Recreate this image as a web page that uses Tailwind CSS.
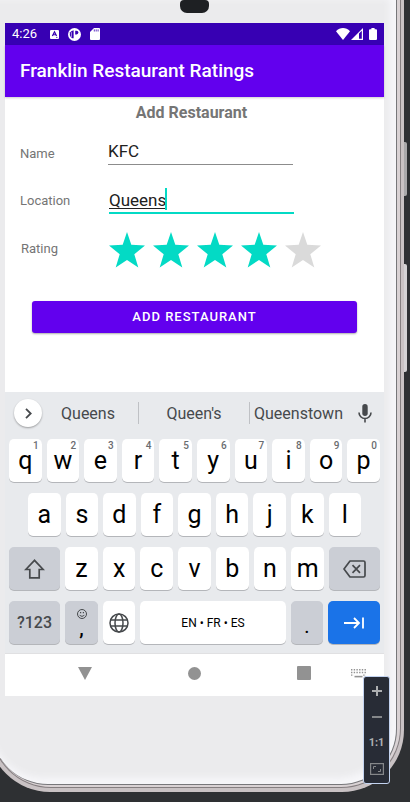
<!DOCTYPE html>
<html lang="en">
<head>
<meta charset="utf-8">
<meta name="viewport" content="width=device-width, initial-scale=1">
<title>Franklin Restaurant Ratings</title>
<script src="https://cdn.jsdelivr.net/npm/@tailwindcss/browser@4"></script>
</head>
<body class="bg-[#2e3033] font-['Roboto',sans-serif]">
<div class="relative flex min-h-screen overflow-hidden pr-[6px] pb-[10px]">
  <!-- side buttons of the handset -->
  <span class="absolute top-[142px] right-[3px] h-[54px] w-2 rounded-r-xs bg-[#aaa9ab]"></span>
  <span class="absolute top-[264px] right-[3px] h-[108px] w-2 rounded-r-xs bg-[#d4d2d4]"></span>

  <!-- metal rim -->
  <div class="relative -ml-3 flex flex-1 rounded-b-[62px] bg-[#c9c2c4] pr-[3px] pb-[4px] pl-[3px]">
   <div class="flex flex-1 rounded-b-[60px] border-x border-b border-[#857e80] bg-[#d9d2d4] pr-[3px] pb-[2px]">
    <!-- glass -->
    <div class="flex flex-1 rounded-b-[56px] border-r border-b border-[#77777a] bg-[#ebebed] pr-[12px] pl-[13px] shadow-[inset_-4px_-4px_7px_2px_#f7f7fa]">
     <div class="flex flex-1 flex-col">
      <div class="flex h-[23px] justify-center"><span class="h-[13px] w-[29px] rounded-b-[7px] rounded-t-sm bg-[#1e2023]"></span></div>

      <div class="flex flex-col bg-white">
        <!-- status bar -->
        <div class="flex h-[22px] items-center bg-[#3700b3] pr-[7px] pl-[7px] text-white">
          <span class="w-[38px] text-[13px]">4:26</span>
          <svg class="mr-[9px] size-[9px]" viewBox="0 0 9 10" preserveAspectRatio="none"><rect width="9" height="10" rx="1" fill="#fff"/><path d="M2.4 6.7 4.5 2l2.1 4.7M3.2 5.2h2.6" fill="none" stroke="#3700b3" stroke-width="1.2"/><path d="M6 8.3h1.5" stroke="#3700b3" stroke-width=".7"/></svg>
          <svg class="mr-[9px] size-[13px]" viewBox="0 0 13 13"><circle cx="6.5" cy="6.5" r="6.5" fill="#fff"/><path d="M5.600 2.200V10.200H4.200A4.900 4.900 0 0 1 2.200 4.200Q3.500 2.500 5.600 2.200z" fill="#3700b3"/><path d="M3.400 4.200V9.200" stroke="#fff" stroke-width=".6"/><path d="M7.200 2.800h1.400a1.700 1.700 0 0 1 0 3.6H7.2z" fill="#3700b3"/></svg>
          <svg class="h-[12px] w-[10px]" viewBox="0 0 10 12"><path d="M4 0h5a1 1 0 0 1 1 1v10a1 1 0 0 1-1 1H1a1 1 0 0 1-1-1V4z" fill="#fff"/><path d="M4.300 1.400v2.100M6.200 1.400v2.100M8.100 1.400v2.100" stroke="#3700b3" stroke-width=".8"/></svg>
          <svg class="ml-auto h-[12px] w-[14px]" viewBox="0 0 14 12"><path d="M7 12 0 3.200C4-1 10-1 14 3.200z" fill="#fff"/></svg>
          <svg class="ml-px h-[12px] w-[12px]" viewBox="0 0 12 12"><path d="M0 12 12 0v12z" fill="#fff"/><path d="M8 5.600 10.800 2.800v8H8z" fill="#3700b3"/></svg>
          <svg class="ml-[6px] h-[12px] w-[8px]" viewBox="0 0 8 12"><path d="M2.400 0h3.200v1.200H7a1 1 0 0 1 1 1V11a1 1 0 0 1-1 1H1a1 1 0 0 1-1-1V2.200a1 1 0 0 1 1-1h1.400z" fill="#fff"/></svg>
        </div>

        <header class="flex h-[52px] items-center bg-[#6200ee] px-[15px] shadow-[0_1px_2px_#0003]">
          <h1 class="text-[19px] font-medium text-white">Franklin Restaurant Ratings</h1>
        </header>

        <form class="flex flex-col pb-[59px]">
          <h2 class="pr-1.5 text-center text-[16px] leading-[31px] font-bold text-[#757575]">Add Restaurant</h2>
          <div class="flex h-[52px] items-center pl-[15px]">
            <label for="name" class="w-[88px] text-[13px] text-[#757575]">Name</label>
            <input id="name" value="KFC" class="mb-[6px] h-[28px] w-[185px] border-b border-[#8c8c8c] pt-px text-[17px] text-[#212121] outline-none">
          </div>
          <div class="flex h-[42px] items-center pl-[15px]">
            <label for="location" class="w-[89px] text-[13px] text-[#757575]">Location</label>
            <div class="relative mb-[2px]">
              <input id="location" value="Queens" class="h-[28px] w-[185px] border-b-2 border-[#03dac5] pt-[2px] text-[17px] text-[#212121] underline underline-offset-2 outline-none">
              <span class="absolute top-[2px] left-[56px] h-[22px] w-[2px] bg-[#03dac5]"></span>
            </div>
          </div>
          <div role="radiogroup" aria-labelledby="rating-label" class="flex h-[54px] items-center pl-[16px]">
            <span id="rating-label" class="w-[88px] text-[13px] text-[#757575]">Rating</span>
            <div class="flex gap-2 pt-[2px]">
              <label class="relative text-[#03dac5]"><input type="radio" name="rating" class="absolute size-full appearance-none" aria-label="1 star"><svg class="size-[36px]" viewBox="0 0 36 36" fill="currentColor"><path d="M18 0l4.300 12.700L36 13.500 25.300 22.200 29.300 35.500 18 28 6.700 35.500l4-13.300L0 13.500l13.700-.8z"/></svg></label>
              <label class="relative text-[#03dac5]"><input type="radio" name="rating" class="absolute size-full appearance-none" aria-label="2 stars"><svg class="size-[36px]" viewBox="0 0 36 36" fill="currentColor"><path d="M18 0l4.300 12.700L36 13.500 25.300 22.200 29.300 35.500 18 28 6.700 35.500l4-13.300L0 13.500l13.700-.8z"/></svg></label>
              <label class="relative text-[#03dac5]"><input type="radio" name="rating" class="absolute size-full appearance-none" aria-label="3 stars"><svg class="size-[36px]" viewBox="0 0 36 36" fill="currentColor"><path d="M18 0l4.300 12.700L36 13.500 25.300 22.200 29.300 35.500 18 28 6.700 35.500l4-13.300L0 13.500l13.700-.8z"/></svg></label>
              <label class="relative text-[#03dac5]"><input type="radio" name="rating" class="absolute size-full appearance-none" aria-label="4 stars" checked><svg class="size-[36px]" viewBox="0 0 36 36" fill="currentColor"><path d="M18 0l4.300 12.700L36 13.500 25.300 22.200 29.300 35.500 18 28 6.700 35.500l4-13.300L0 13.500l13.700-.8z"/></svg></label>
              <label class="relative text-[#dadada]"><input type="radio" name="rating" class="absolute size-full appearance-none" aria-label="5 stars"><svg class="size-[36px]" viewBox="0 0 36 36" fill="currentColor"><path d="M18 0l4.300 12.700L36 13.500 25.300 22.200 29.300 35.500 18 28 6.700 35.500l4-13.300L0 13.500l13.700-.8z"/></svg></label>
            </div>
          </div>
          <button type="button" class="mx-[27px] mt-[25px] h-[32px] rounded-[3px] bg-[#6200ee] text-[13px] font-medium tracking-[1px] text-white shadow-[0_1px_2px_#0005]">ADD RESTAURANT</button>
        </form>

        <!-- on-screen keyboard -->
        <section aria-label="Keyboard" class="bg-[#e8eaed] pb-[9px]">
          <div class="flex h-[42px] items-center pr-[12px] pl-[9px] text-[16px] text-[#46494c]">
            <button aria-label="More" class="flex size-[28px] items-center justify-center rounded-full bg-white shadow-[0_1px_2px_#0005]"><svg class="h-[11px] w-[7px]" viewBox="0 0 7 11" fill="none" stroke="#46494c" stroke-width="1.800"><path d="M1 .8 5.700 5.500 1 10.200"/></svg></button>
            <button class="w-[92px] pt-px text-center">Queens</button>
            <span class="ml-[4px] h-[22px] w-px bg-[#bfc1c5]"></span>
            <button class="flex-1 pt-px text-center">Queen's</button>
            <span class="h-[22px] w-px bg-[#bfc1c5]"></span>
            <button class="w-[97px] pt-px text-center">Queenstown</button>
            <button aria-label="Voice input" class="ml-[11px]"><svg class="h-[19px] w-[14px]" viewBox="0 0 14 19"><rect x="4.300" y="0" width="5.400" height="12" rx="2.700" fill="#46494c"/><path d="M1 8.500a6 6 0 0 0 12 0M7 14.500V18.500" fill="none" stroke="#46494c" stroke-width="1.600"/></svg></button>
          </div>

          <div class="flex flex-col gap-[11px] px-[4px] pt-[5px] text-[25px] text-black">
            <div class="flex gap-[5px]">
              <button class="relative h-[43px] flex-1 rounded-[5px] bg-white shadow-[0_1px_0_#b4b6ba]">q<span class="absolute top-[2px] right-[3px] text-[10px] leading-[10px] font-medium text-[#6a6c70]">1</span></button>
              <button class="relative h-[43px] flex-1 rounded-[5px] bg-white shadow-[0_1px_0_#b4b6ba]">w<span class="absolute top-[2px] right-[3px] text-[10px] leading-[10px] font-medium text-[#6a6c70]">2</span></button>
              <button class="relative h-[43px] flex-1 rounded-[5px] bg-white shadow-[0_1px_0_#b4b6ba]">e<span class="absolute top-[2px] right-[3px] text-[10px] leading-[10px] font-medium text-[#6a6c70]">3</span></button>
              <button class="relative h-[43px] flex-1 rounded-[5px] bg-white shadow-[0_1px_0_#b4b6ba]">r<span class="absolute top-[2px] right-[3px] text-[10px] leading-[10px] font-medium text-[#6a6c70]">4</span></button>
              <button class="relative h-[43px] flex-1 rounded-[5px] bg-white shadow-[0_1px_0_#b4b6ba]">t<span class="absolute top-[2px] right-[3px] text-[10px] leading-[10px] font-medium text-[#6a6c70]">5</span></button>
              <button class="relative h-[43px] flex-1 rounded-[5px] bg-white shadow-[0_1px_0_#b4b6ba]">y<span class="absolute top-[2px] right-[3px] text-[10px] leading-[10px] font-medium text-[#6a6c70]">6</span></button>
              <button class="relative h-[43px] flex-1 rounded-[5px] bg-white shadow-[0_1px_0_#b4b6ba]">u<span class="absolute top-[2px] right-[3px] text-[10px] leading-[10px] font-medium text-[#6a6c70]">7</span></button>
              <button class="relative h-[43px] flex-1 rounded-[5px] bg-white shadow-[0_1px_0_#b4b6ba]">i<span class="absolute top-[2px] right-[3px] text-[10px] leading-[10px] font-medium text-[#6a6c70]">8</span></button>
              <button class="relative h-[43px] flex-1 rounded-[5px] bg-white shadow-[0_1px_0_#b4b6ba]">o<span class="absolute top-[2px] right-[3px] text-[10px] leading-[10px] font-medium text-[#6a6c70]">9</span></button>
              <button class="relative h-[43px] flex-1 rounded-[5px] bg-white shadow-[0_1px_0_#b4b6ba]">p<span class="absolute top-[2px] right-[3px] text-[10px] leading-[10px] font-medium text-[#6a6c70]">0</span></button>
            </div>
            <div class="flex gap-[5px] px-[19px]">
              <button class="h-[43px] flex-1 rounded-[5px] bg-white shadow-[0_1px_0_#b4b6ba]">a</button>
              <button class="h-[43px] flex-1 rounded-[5px] bg-white shadow-[0_1px_0_#b4b6ba]">s</button>
              <button class="h-[43px] flex-1 rounded-[5px] bg-white shadow-[0_1px_0_#b4b6ba]">d</button>
              <button class="h-[43px] flex-1 rounded-[5px] bg-white shadow-[0_1px_0_#b4b6ba]">f</button>
              <button class="h-[43px] flex-1 rounded-[5px] bg-white shadow-[0_1px_0_#b4b6ba]">g</button>
              <button class="h-[43px] flex-1 rounded-[5px] bg-white shadow-[0_1px_0_#b4b6ba]">h</button>
              <button class="h-[43px] flex-1 rounded-[5px] bg-white shadow-[0_1px_0_#b4b6ba]">j</button>
              <button class="h-[43px] flex-1 rounded-[5px] bg-white shadow-[0_1px_0_#b4b6ba]">k</button>
              <button class="h-[43px] flex-1 rounded-[5px] bg-white shadow-[0_1px_0_#b4b6ba]">l</button>
            </div>
            <div class="flex gap-[5px]">
              <button aria-label="Shift" class="flex h-[43px] w-[51px] items-center justify-center rounded-[5px] bg-[#cbced5] shadow-[0_1px_0_#b4b6ba]"><svg class="h-[20px] w-[21px]" viewBox="0 0 21 20" fill="none" stroke="#46494c" stroke-width="1.700"><path d="M10.500 1.300 1.800 10.500H5.800V18.800H15.200V10.500H19.200z"/></svg></button>
              <button class="h-[43px] flex-1 rounded-[5px] bg-white shadow-[0_1px_0_#b4b6ba]">z</button>
              <button class="h-[43px] flex-1 rounded-[5px] bg-white shadow-[0_1px_0_#b4b6ba]">x</button>
              <button class="h-[43px] flex-1 rounded-[5px] bg-white shadow-[0_1px_0_#b4b6ba]">c</button>
              <button class="h-[43px] flex-1 rounded-[5px] bg-white shadow-[0_1px_0_#b4b6ba]">v</button>
              <button class="h-[43px] flex-1 rounded-[5px] bg-white shadow-[0_1px_0_#b4b6ba]">b</button>
              <button class="h-[43px] flex-1 rounded-[5px] bg-white shadow-[0_1px_0_#b4b6ba]">n</button>
              <button class="h-[43px] flex-1 rounded-[5px] bg-white shadow-[0_1px_0_#b4b6ba]">m</button>
              <button aria-label="Backspace" class="flex h-[43px] w-[51px] items-center justify-center rounded-[5px] bg-[#cbced5] shadow-[0_1px_0_#b4b6ba]"><svg class="h-[18px] w-[23px]" viewBox="0 0 23 18" fill="none" stroke="#46494c" stroke-width="1.700"><path d="M7 1H20.500A1.500 1.500 0 0 1 22 2.500V15.500A1.500 1.500 0 0 1 20.500 17H7L1 9z" stroke-linejoin="round"/><path d="M9.500 5.200 17 12.800M17 5.200 9.500 12.800"/></svg></button>
            </div>
            <div class="flex gap-[5px]">
              <button class="h-[43px] w-[51px] rounded-[5px] bg-[#cbced5] text-[16px] font-medium text-[#46494c] shadow-[0_1px_0_#b4b6ba]">?123</button>
              <button class="flex h-[43px] w-[33px] flex-col items-center gap-px rounded-[5px] bg-[#cbced5] pt-[8px] shadow-[0_1px_0_#b4b6ba]"><svg class="size-[10px]" viewBox="0 0 10 10" fill="none" stroke="#46494c"><circle cx="5" cy="5" r="4.500"/><path d="M2.700 5.900a2.500 2.300 0 0 0 4.600 0"/><path d="M3 3.600h1.200M5.800 3.600H7" stroke-width="1.200"/></svg><span class="text-[20px] leading-[16px] font-medium">,</span></button>
              <button aria-label="Change language" class="flex h-[43px] w-[32px] items-center justify-center rounded-[5px] bg-white shadow-[0_1px_0_#b4b6ba]"><svg class="size-[20px]" viewBox="0 0 20 20" fill="none" stroke="#46494c" stroke-width="1.500"><circle cx="10" cy="10" r="9"/><ellipse cx="10" cy="10" rx="4" ry="9"/><path d="M1.700 7H18.300M1.700 13H18.300"/></svg></button>
              <button class="h-[43px] flex-1 rounded-[5px] bg-white text-[12px] shadow-[0_1px_0_#b4b6ba]">EN • FR • ES</button>
              <button class="h-[43px] w-[32px] rounded-[5px] bg-[#cbced5] pt-[7px] text-[20px] leading-[20px] shadow-[0_1px_0_#b4b6ba]">.</button>
              <button aria-label="Next" class="flex h-[43px] w-[52px] items-center justify-center rounded-[5px] bg-[#1a73e8] shadow-[0_1px_0_#b4b6ba]"><svg class="h-[12px] w-[20px]" viewBox="0 0 20 12" fill="none" stroke="#fff" stroke-width="1.800"><path d="M0 6H15M10 1 15 6 10 11M19 .500V11.500"/></svg></button>
            </div>
          </div>
        </section>

        <!-- system navigation -->
        <nav class="relative flex h-[43px] items-center justify-center gap-[96px] border-t border-[#e0e0e2] pb-[4px]">
          <button aria-label="Back"><svg class="h-[13px] w-[14px]" viewBox="0 0 14 13"><path d="M0 0h14L7 13z" fill="#929292"/></svg></button>
          <button aria-label="Home"><svg class="size-[13px]" viewBox="0 0 13 13"><circle cx="6.500" cy="6.500" r="6.500" fill="#929292"/></svg></button>
          <button aria-label="Overview"><svg class="size-[14px]" viewBox="0 0 14 14"><rect width="14" height="14" rx="1" fill="#929292"/></svg></button>
          <button aria-label="Switch keyboard" class="absolute top-[15px] right-[18px]"><svg class="h-[9px] w-[15px]" viewBox="0 0 15 9" stroke="#929292" fill="none"><path d="M0 .800H15M0 3.500H15" stroke-width="1.400" stroke-dasharray="1.400 1.300"/><path d="M0 6.200H2.800" stroke-width="1.200" stroke-dasharray="1.400 1.300"/><path d="M12.200 6.200H15" stroke-width="1.200" stroke-dasharray="1.400 1.300"/><path d="M3.500 7.600H11.500" stroke-width="1.600"/></svg></button>
        </nav>
      </div>
     </div>
    </div>
   </div>
  </div>

  <!-- zoom controls floating over the handset -->
  <div class="absolute top-[676px] right-[20px] flex h-[108px] w-[27px] flex-col items-center rounded-[3px] border border-[#c3d3f0] bg-[#282c36] py-px text-[#adafb1]">
    <button aria-label="Zoom in" class="flex h-[26px] items-center"><svg class="size-[10px]" viewBox="0 0 10 10" stroke="currentColor" stroke-width="2"><path d="M5 0V10M0 5H10"/></svg></button>
    <button aria-label="Zoom out" class="flex h-[26px] items-center"><svg class="size-[10px]" viewBox="0 0 10 10" stroke="#85878a" stroke-width="2"><path d="M0 5H10"/></svg></button>
    <button class="h-[26px] text-[11px] font-bold">1:1</button>
    <button aria-label="Fit to screen" class="flex h-[26px] items-center"><svg class="h-[12px] w-[14px]" viewBox="0 0 14 12" fill="none" stroke="#85878a"><rect x=".600" y=".600" width="12.800" height="10.800" stroke-width="1.200"/><path d="M3.500 6V3.500H6M8 8.500H10.500V6"/></svg></button>
  </div>
</div>
</body>
</html>
